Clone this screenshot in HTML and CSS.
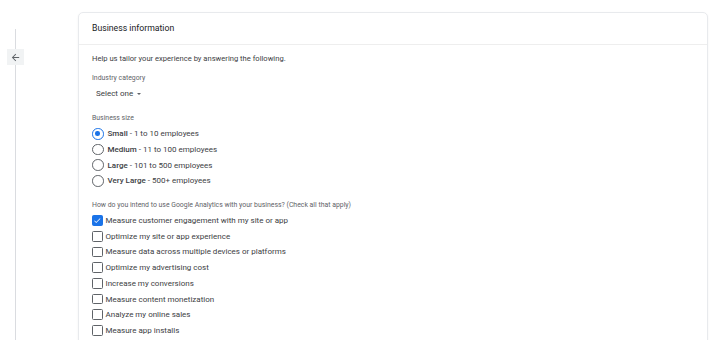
FILE: index.html
```html
<!DOCTYPE html>
<html lang="en">

<head>
    <meta charset="UTF-8">
    <title>Business information</title>
    <link rel="stylesheet" href="styles.css">
</head>

<body>
    <div class="page">
        <div class="rail">
            <div class="rail-line top"></div>
            <button class="back-button" aria-label="Back">
                <svg width="11" height="11" viewBox="0 0 24 24"><path d="M20 11H7.83l5.59-5.59L12 4l-8 8 8 8 1.41-1.41L7.83 13H20v-2z" fill="#5f6368"/></svg>
            </button>
            <div class="rail-line bottom"></div>
        </div>

        <div class="card">
            <div class="card-header">Business information</div>
            <div class="card-body">
                <p class="intro">Help us tailor your experience by answering the following.</p>

                <div class="field-label">Industry category</div>
                <div class="select">Select one <span class="caret"></span></div>

                <div class="field-label size-label">Business size</div>
                <div class="radio-list">
                    <label class="radio checked"><span class="dot"></span><b>Small</b>&nbsp;- 1 to 10 employees</label>
                    <label class="radio"><span class="dot"></span><b>Medium</b>&nbsp;- 11 to 100 employees</label>
                    <label class="radio"><span class="dot"></span><b>Large</b>&nbsp;- 101 to 500 employees</label>
                    <label class="radio"><span class="dot"></span><b>Very Large</b>&nbsp;- 500+ employees</label>
                </div>

                <div class="field-label use-label">How do you intend to use Google Analytics with your business? (Check all that apply)</div>
                <div class="check-list">
                    <label class="check checked"><span class="box"><svg width="9" height="9" viewBox="0 0 24 24"><path d="M9 16.2 4.8 12l-1.4 1.4L9 19 21 7l-1.4-1.4L9 16.2z" fill="#fff"/></svg></span>Measure customer engagement with my site or app</label>
                    <label class="check"><span class="box"></span>Optimize my site or app experience</label>
                    <label class="check"><span class="box"></span>Measure data across multiple devices or platforms</label>
                    <label class="check"><span class="box"></span>Optimize my advertising cost</label>
                    <label class="check"><span class="box"></span>Increase my conversions</label>
                    <label class="check"><span class="box"></span>Measure content monetization</label>
                    <label class="check"><span class="box"></span>Analyze my online sales</label>
                    <label class="check"><span class="box"></span>Measure app installs</label>
                </div>
            </div>
        </div>
    </div>
</body>

</html>
```

FILE: styles.css
```css
* {
    box-sizing: border-box;
}

body {
    margin: 0;
    font-family: Roboto, "Liberation Sans", Arial, sans-serif;
    color: #3c4043;
    background: #fff;
}

.page {
    display: flex;
    align-items: flex-start;
    padding-top: 12px;
    height: 340px;
    overflow: hidden;
}

/* 左边的竖线和返回按钮 */
.rail {
    width: 78px;
    flex-shrink: 0;
    align-self: stretch;
    display: flex;
    flex-direction: column;
    padding-left: 7px;
    padding-top: 17px;
}

.rail-line {
    width: 1px;
    background: #dadce0;
    margin-left: 8px;
}

.rail-line.top {
    height: 20px;
}

.rail-line.bottom {
    flex: 1;
}

.back-button {
    width: 17px;
    height: 16px;
    padding: 0;
    border: none;
    background: #f1f3f4;
    display: flex;
    align-items: center;
    justify-content: center;
}

.card {
    width: 630px;
    height: 340px;
    border: 1px solid #e8eaed;
    border-radius: 5px;
    box-shadow: 0 1px 2px rgba(60, 64, 67, 0.08);
}

.card-header {
    height: 32px;
    line-height: 31px;
    padding-left: 13px;
    font-size: 8.7px;
    color: #202124;
    border-bottom: 1px solid #eeeeee;
}

.card-body {
    padding: 8px 13px 0;
}

.intro {
    margin: 0 0 10px;
    font-size: 7.6px;
    line-height: 11px;
}

.field-label {
    font-size: 6.9px;
    line-height: 9px;
    color: #5f6368;
}

.select {
    margin: 6px 0 0 4px;
    font-size: 8px;
    line-height: 10px;
}

.caret {
    display: inline-block;
    border-left: 2px solid transparent;
    border-right: 2px solid transparent;
    border-top: 2px solid #5f6368;
    vertical-align: middle;
    margin-left: 2px;
}

.size-label {
    margin-top: 15px;
}

.radio-list,
.check-list {
    display: flex;
    flex-direction: column;
}

.radio-list {
    margin-top: 3px;
}

.radio {
    display: flex;
    align-items: center;
    height: 15.7px;
    font-size: 8px;
}

.radio b {
    font-weight: 500;
}

.radio .dot {
    width: 11.5px;
    height: 11.5px;
    border: 1.3px solid #5f6368;
    border-radius: 50%;
    margin-right: 4px;
    position: relative;
}

.radio.checked .dot {
    border-color: #1a73e8;
}

.radio.checked .dot::after {
    content: "";
    position: absolute;
    left: 2.2px;
    top: 2.2px;
    width: 4.5px;
    height: 4.5px;
    border-radius: 50%;
    background: #1a73e8;
}

.use-label {
    margin-top: 12px;
}

.check-list {
    margin-top: 3px;
}

.check {
    display: flex;
    align-items: center;
    height: 15.7px;
    font-size: 8px;
}

.check .box {
    width: 10.5px;
    height: 10.5px;
    border: 1.3px solid #5f6368;
    border-radius: 1.5px;
    margin-right: 3px;
    display: flex;
    align-items: center;
    justify-content: center;
}

.check.checked .box {
    background: #1a73e8;
    border-color: #1a73e8;
}
```
